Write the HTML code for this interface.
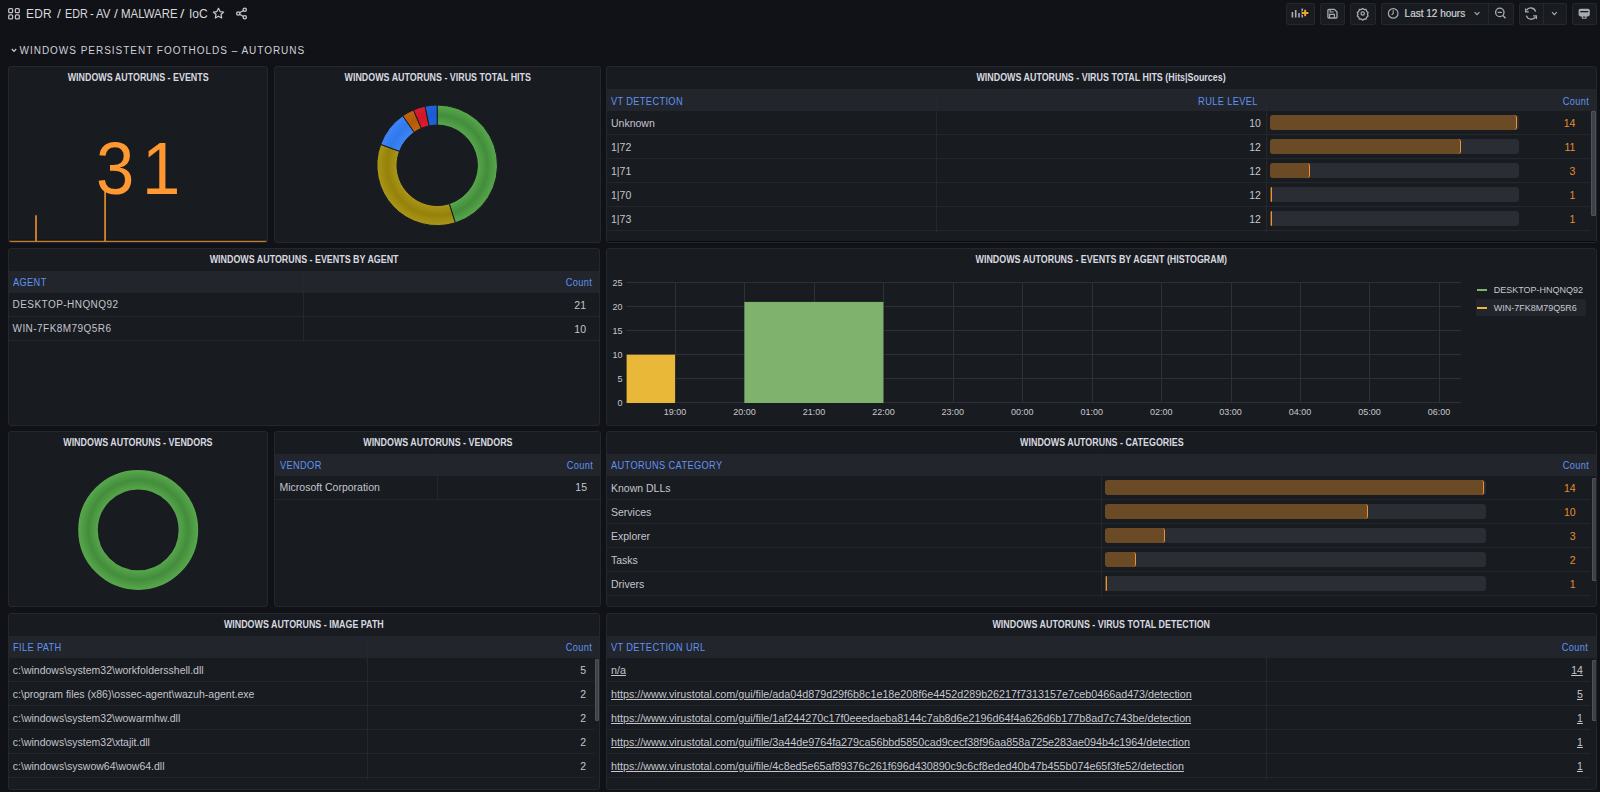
<!DOCTYPE html><html><head><meta charset="utf-8"><style>
*{margin:0;padding:0;box-sizing:border-box}
html,body{width:1600px;height:792px;overflow:hidden;background:#111217;font-family:"Liberation Sans",sans-serif;color:#c4c5ce}
.abs{position:absolute}
.panel{position:absolute;background:#181b1f;border:1px solid #24272c;border-radius:3px;overflow:hidden}
.ttl{position:absolute;left:0;right:0;text-align:center;font-weight:bold;font-size:10px;line-height:12px;white-space:nowrap;color:#d8d9e0}
.ttl span{display:inline-block;transform:scaleX(0.89);transform-origin:center}
.hdr{position:absolute;background:#22252b;}
.th{position:absolute;font-size:10.2px;line-height:12px;color:#5f93f2;white-space:nowrap;letter-spacing:0.4px;transform:scaleX(0.907);transform-origin:0 0}
.th.r{transform-origin:100% 0}
.td{position:absolute;font-size:10.5px;line-height:12px;color:#c4c5ce;white-space:nowrap}
.rl{position:absolute;height:1px;background:#24272c}
.cl{position:absolute;width:1px;background:#24272c}
.btn{position:absolute;top:3px;height:21.5px;border:1px solid #25272c;border-radius:2px;background:#181b1f}
.sb{position:absolute;width:4.5px;background:#3e4148;border:1px solid #50535b;border-radius:1px}
</style></head><body><svg class="abs" style="left:8px;top:8px" width="12" height="12" viewBox="0 0 12 12" fill="none" stroke="#c0c1c8" stroke-width="1.25"><rect x="0.7" y="0.7" width="3.9" height="3.9" rx="0.9"/><rect x="7.4" y="0.7" width="3.9" height="3.9" rx="0.9"/><rect x="0.7" y="6.9" width="3.9" height="3.9" rx="0.9"/><rect x="7.4" y="6.9" width="3.9" height="3.9" rx="0.9"/></svg><div class="abs" style="left:25.98px;top:6px;font-size:13px;line-height:16px;color:#d8d9da;white-space:nowrap;transform-origin:0 0;transform:scaleX(0.915);letter-spacing:0.3px">EDR</div><div class="abs" style="left:57.10px;top:6px;font-size:13px;line-height:16px;color:#d8d9da;white-space:nowrap;transform-origin:0 0;transform:scaleX(1.050);letter-spacing:0px">/</div><div class="abs" style="left:64.57px;top:6px;font-size:13px;line-height:16px;color:#d8d9da;white-space:nowrap;transform-origin:0 0;transform:scaleX(0.829);letter-spacing:0px">EDR</div><div class="abs" style="left:89.80px;top:6px;font-size:13px;line-height:16px;color:#d8d9da;white-space:nowrap;transform-origin:0 0;transform:scaleX(0.850);letter-spacing:0px">-</div><div class="abs" style="left:96.00px;top:6px;font-size:13px;line-height:16px;color:#d8d9da;white-space:nowrap;transform-origin:0 0;transform:scaleX(0.883);letter-spacing:0px">AV</div><div class="abs" style="left:113.80px;top:6px;font-size:13px;line-height:16px;color:#d8d9da;white-space:nowrap;transform-origin:0 0;transform:scaleX(1.050);letter-spacing:0px">/</div><div class="abs" style="left:120.87px;top:6px;font-size:13px;line-height:16px;color:#d8d9da;white-space:nowrap;transform-origin:0 0;transform:scaleX(0.880);letter-spacing:0px">MALWARE</div><div class="abs" style="left:180.40px;top:6px;font-size:13px;line-height:16px;color:#d8d9da;white-space:nowrap;transform-origin:0 0;transform:scaleX(1.200);letter-spacing:0px">/</div><div class="abs" style="left:188.68px;top:6px;font-size:13px;line-height:16px;color:#d8d9da;white-space:nowrap;transform-origin:0 0;transform:scaleX(0.924);letter-spacing:0px">IoC</div><svg class="abs" style="left:212px;top:7px" width="13" height="13" viewBox="0 0 24 24" fill="none" stroke="#c7c8d0" stroke-width="2.2" stroke-linejoin="round"><path d="M12 2.5l2.9 6 6.6.8-4.9 4.5 1.3 6.5L12 17l-5.9 3.3 1.3-6.5L2.5 9.3l6.6-.8z"/></svg><svg class="abs" style="left:235px;top:7px" width="13" height="13" viewBox="0 0 24 24" fill="none" stroke="#c7c8d0" stroke-width="2.4"><circle cx="18" cy="5" r="3"/><circle cx="6" cy="12" r="3"/><circle cx="18" cy="19" r="3"/><path d="M8.6 10.5l6.8-4M8.6 13.5l6.8 4"/></svg><div class="btn" style="left:1286px;width:29px"></div><div class="btn" style="left:1320px;width:25px"></div><div class="btn" style="left:1350px;width:26px"></div><div class="btn" style="left:1381px;width:133px"></div><div class="btn" style="left:1519px;width:48px"></div><div class="btn" style="left:1572px;width:25px"></div><div class="abs" style="left:1488px;top:4px;width:1px;height:20px;background:#25272c"></div><div class="abs" style="left:1543px;top:4px;width:1px;height:20px;background:#25272c"></div><svg class="abs" style="left:0;top:0" width="1600" height="30"><g fill="#a9abb2"><rect x="1291.6" y="12" width="1.6" height="5.5"/><rect x="1294.9" y="10" width="1.6" height="7.5"/><rect x="1298.2" y="13" width="1.6" height="4.5"/><rect x="1301.5" y="8.5" width="1.6" height="9"/></g><path d="M1305.2 9.6v6.8M1301.8 13h6.8" stroke="#0f1116" stroke-width="3.6"/><path d="M1305.2 9.8v6.4M1302 13h6.4" stroke="#f5a52a" stroke-width="2"/><path d="M1328.8 9.4h5.6l2.6 2.6v5.1a0.9 0.9 0 0 1-.9.9h-7.3a0.9 0.9 0 0 1-.9-.9v-6.8a0.9 0.9 0 0 1 .9-.9z" fill="none" stroke="#a9abb2" stroke-width="1.3"/><path d="M1330.2 9.4v2.6h3.6M1329.6 17.8v-3.4h4.8v3.4" fill="none" stroke="#a9abb2" stroke-width="1.2"/><path d="M1362.7 8.4l1.5 1.2 1.9-.1.5 1.8 1.5 1.2-.7 1.8.7 1.8-1.5 1.2-.5 1.8-1.9-.1-1.5 1.2-1.5-1.2-1.9.1-.5-1.8-1.5-1.2.7-1.8-.7-1.8 1.5-1.2.5-1.8 1.9.1z" fill="none" stroke="#a9abb2" stroke-width="1.3" stroke-linejoin="round"/><circle cx="1362.7" cy="13.5" r="1.7" fill="none" stroke="#a9abb2" stroke-width="1.2"/><circle cx="1393.2" cy="13.4" r="4.8" fill="none" stroke="#a9abb2" stroke-width="1.2"/><path d="M1393.2 10.2v3.2l-1.6 1.4" fill="none" stroke="#a9abb2" stroke-width="1.1"/><path d="M1474.6 12.2l2.4 2.4 2.4-2.4" fill="none" stroke="#a9abb2" stroke-width="1.2"/><circle cx="1499.8" cy="12.4" r="4.2" fill="none" stroke="#a9abb2" stroke-width="1.3"/><path d="M1502.9 15.6l2.6 2.7M1497.7 12.4h4.2" stroke="#a9abb2" stroke-width="1.4"/><path d="M1535.6 11.6a5 5 0 0 0-9.1-1.2M1526.4 15.6a5 5 0 0 0 9.1 1.2" fill="none" stroke="#a9abb2" stroke-width="1.3"/><path d="M1525.6 8.6v3.2h3.2M1536.4 19v-3.2h-3.2" fill="none" stroke="#a9abb2" stroke-width="1.3"/><path d="M1552 12.2l2.4 2.4 2.4-2.4" fill="none" stroke="#a9abb2" stroke-width="1.2"/><rect x="1578.6" y="8.8" width="11.2" height="7.6" rx="1.8" fill="#a9abb2"/><rect x="1580.2" y="11" width="8" height="1.3" fill="#181b1f"/><rect x="1581.8" y="16" width="4.8" height="2.8" rx="0.6" fill="#a9abb2"/><rect x="1583" y="16.6" width="2.4" height="1.2" fill="#181b1f"/></svg><div class="abs" style="left:1404.6px;top:7px;font-size:10px;line-height:13px;color:#d0d1d8;-webkit-text-stroke:0.2px #d0d1d8">Last 12 hours</div><svg class="abs" style="left:10.5px;top:48px" width="6" height="5" viewBox="0 0 6 5" fill="none" stroke="#c7c8d0" stroke-width="1.3"><path d="M.8 1l2.2 2.4L5.2 1"/></svg><div class="abs" style="left:19.5px;top:45.3px;font-size:10px;line-height:12px;color:#d0d1d8;letter-spacing:0.98px">WINDOWS PERSISTENT FOOTHOLDS – AUTORUNS</div><div class="panel" style="left:8px;top:66px;width:260px;height:177px"><div class="ttl" style="top:5px"><span>WINDOWS AUTORUNS - EVENTS</span></div><svg class="abs" style="left:0;top:0" width="258" height="175"><path d="M0 174.3H258" stroke="#c27a2c" stroke-width="1.4"/><path d="M0 173H258" stroke="#0f141c" stroke-width="1"/><path d="M27 174V148.3M96.1 174V120.4" stroke="#d9862b" stroke-width="1.8"/></svg><div class="abs" style="left:87.2px;top:63.5px;font-size:74px;line-height:75px;color:#ff9830;transform:scaleX(0.93);transform-origin:0 0">3</div><div class="abs" style="left:133.4px;top:63.5px;font-size:74px;line-height:75px;color:#ff9830;transform:scaleX(0.93);transform-origin:0 0">1</div></div><div class="panel" style="left:274px;top:66px;width:327px;height:177px"><div class="ttl" style="top:5px"><span>WINDOWS AUTORUNS - VIRUS TOTAL HITS</span></div><svg class="abs" style="left:0;top:0" width="327" height="177"><path d="M162.20 38.00A60.3 60.3 0 0 1 180.25 155.83L174.23 136.66A40.2 40.2 0 0 0 162.20 58.10Z" fill="url(#g0)" stroke="#181b1f" stroke-width="1"/><path d="M180.25 155.83A60.3 60.3 0 0 1 105.65 77.36L124.50 84.34A40.2 40.2 0 0 0 174.23 136.66Z" fill="url(#g1)" stroke="#181b1f" stroke-width="1"/><path d="M105.65 77.36A60.3 60.3 0 0 1 127.75 48.81L139.24 65.31A40.2 40.2 0 0 0 124.50 84.34Z" fill="url(#g2)" stroke="#181b1f" stroke-width="1"/><path d="M127.75 48.81A60.3 60.3 0 0 1 138.42 42.89L146.35 61.36A40.2 40.2 0 0 0 139.24 65.31Z" fill="url(#g3)" stroke="#181b1f" stroke-width="1"/><path d="M138.42 42.89A60.3 60.3 0 0 1 150.06 39.23L154.11 58.92A40.2 40.2 0 0 0 146.35 61.36Z" fill="url(#g4)" stroke="#181b1f" stroke-width="1"/><path d="M150.06 39.23A60.3 60.3 0 0 1 162.20 38.00L162.20 58.10A40.2 40.2 0 0 0 154.11 58.92Z" fill="url(#g5)" stroke="#181b1f" stroke-width="1"/><defs><radialGradient id="g0" gradientUnits="userSpaceOnUse" cx="162.2" cy="98.3" r="60.3"><stop offset="0.66" stop-color="#58a84d"/><stop offset="0.83" stop-color="#438d3b"/><stop offset="1" stop-color="#58a84d"/></radialGradient><radialGradient id="g1" gradientUnits="userSpaceOnUse" cx="162.2" cy="98.3" r="60.3"><stop offset="0.66" stop-color="#aa9618"/><stop offset="0.83" stop-color="#96820a"/><stop offset="1" stop-color="#aa9618"/></radialGradient><radialGradient id="g2" gradientUnits="userSpaceOnUse" cx="162.2" cy="98.3" r="60.3"><stop offset="0.66" stop-color="#3f86f6"/><stop offset="0.83" stop-color="#3079ec"/><stop offset="1" stop-color="#3f86f6"/></radialGradient><radialGradient id="g3" gradientUnits="userSpaceOnUse" cx="162.2" cy="98.3" r="60.3"><stop offset="0.66" stop-color="#c06410"/><stop offset="0.83" stop-color="#b35a0a"/><stop offset="1" stop-color="#c06410"/></radialGradient><radialGradient id="g4" gradientUnits="userSpaceOnUse" cx="162.2" cy="98.3" r="60.3"><stop offset="0.66" stop-color="#dc1d31"/><stop offset="0.83" stop-color="#cf1529"/><stop offset="1" stop-color="#dc1d31"/></radialGradient><radialGradient id="g5" gradientUnits="userSpaceOnUse" cx="162.2" cy="98.3" r="60.3"><stop offset="0.66" stop-color="#2064da"/><stop offset="0.83" stop-color="#1a5bd0"/><stop offset="1" stop-color="#2064da"/></radialGradient></defs></svg></div><div class="panel" style="left:606px;top:66px;width:991px;height:177px"><div class="ttl" style="top:5px"><span>WINDOWS AUTORUNS - VIRUS TOTAL HITS (Hits|Sources)</span></div><div class="hdr" style="left:0;top:22px;width:989px;height:22px"></div><div class="cl" style="left:328.6px;top:22px;height:144px"></div><div class="cl" style="left:658.5px;top:22px;height:144px"></div><div class="rl" style="left:0;top:67px;width:983px"></div><div class="rl" style="left:0;top:91px;width:983px"></div><div class="rl" style="left:0;top:115px;width:983px"></div><div class="rl" style="left:0;top:139px;width:983px"></div><div class="rl" style="left:0;top:163px;width:983px"></div><div class="th" style="left:3.6px;top:28.6px">VT DETECTION</div><div class="th r" style="right:338.0px;top:28.6px">RULE LEVEL</div><div class="th r" style="right:7.3px;top:28.6px">Count</div><div class="td" style="left:4px;top:49.5px;">Unknown</div><div class="td" style="right:335.1px;top:49.5px;">10</div><div class="abs" style="left:663px;top:48px;width:249px;height:15px;border-radius:3px;background:#2a2d33"></div><div class="abs" style="left:663px;top:48px;width:247.0px;height:15px;border-radius:3px;background:#6b4a26;border-right:1.5px solid #f0912e"></div><div class="td" style="right:20.6px;top:49.5px;color:#e98c2c;">14</div><div class="td" style="left:4px;top:73.5px;">1|72</div><div class="td" style="right:335.1px;top:73.5px;">12</div><div class="abs" style="left:663px;top:72px;width:249px;height:15px;border-radius:3px;background:#2a2d33"></div><div class="abs" style="left:663px;top:72px;width:190.5px;height:15px;border-radius:3px;background:#6b4a26;border-right:1.5px solid #f0912e"></div><div class="td" style="right:20.6px;top:73.5px;color:#e98c2c;">11</div><div class="td" style="left:4px;top:97.5px;">1|71</div><div class="td" style="right:335.1px;top:97.5px;">12</div><div class="abs" style="left:663px;top:96px;width:249px;height:15px;border-radius:3px;background:#2a2d33"></div><div class="abs" style="left:663px;top:96px;width:39.7px;height:15px;border-radius:3px;background:#6b4a26;border-right:1.5px solid #f0912e"></div><div class="td" style="right:20.6px;top:97.5px;color:#e98c2c;">3</div><div class="td" style="left:4px;top:121.5px;">1|70</div><div class="td" style="right:335.1px;top:121.5px;">12</div><div class="abs" style="left:663px;top:120px;width:249px;height:15px;border-radius:3px;background:#2a2d33"></div><div class="abs" style="left:663px;top:120px;width:2.0px;height:15px;border-radius:3px;background:#6b4a26;border-right:1.5px solid #f0912e"></div><div class="td" style="right:20.6px;top:121.5px;color:#e98c2c;">1</div><div class="td" style="left:4px;top:145.5px;">1|73</div><div class="td" style="right:335.1px;top:145.5px;">12</div><div class="abs" style="left:663px;top:144px;width:249px;height:15px;border-radius:3px;background:#2a2d33"></div><div class="abs" style="left:663px;top:144px;width:2.0px;height:15px;border-radius:3px;background:#6b4a26;border-right:1.5px solid #f0912e"></div><div class="td" style="right:20.6px;top:145.5px;color:#e98c2c;">1</div><div class="sb" style="left:984px;top:44px;height:105px"></div><div class="abs" style="left:0;top:174px;width:989px;height:1px;background:#0a0b0d"></div></div><div class="panel" style="left:8px;top:248px;width:592px;height:178px"><div class="ttl" style="top:5px"><span>WINDOWS AUTORUNS - EVENTS BY AGENT</span></div><div class="hdr" style="left:0;top:22px;width:590px;height:22px"></div><div class="cl" style="left:294px;top:22px;height:70px"></div><div class="rl" style="left:0;top:67px;width:590px"></div><div class="rl" style="left:0;top:91px;width:590px"></div><div class="th" style="left:4px;top:28.3px">AGENT</div><div class="th r" style="right:6.6px;top:28.3px">Count</div><div class="td" style="left:3.5px;top:49.8px;font-size:10px;letter-spacing:0.45px">DESKTOP-HNQNQ92</div><div class="td" style="right:13.0px;top:49.5px;">21</div><div class="td" style="left:3.5px;top:73.8px;font-size:10px;letter-spacing:0.45px">WIN-7FK8M79Q5R6</div><div class="td" style="right:13.0px;top:73.5px;">10</div></div><div class="panel" style="left:606px;top:248px;width:991px;height:178px"><div class="ttl" style="top:5px"><span>WINDOWS AUTORUNS - EVENTS BY AGENT (HISTOGRAM)</span></div><svg class="abs" style="left:0;top:0" width="989" height="176"><path d="M19.6 153.5H854" stroke="#2d3036" stroke-width="1"/><path d="M19.6 129.5H854" stroke="#2d3036" stroke-width="1"/><path d="M19.6 105.5H854" stroke="#2d3036" stroke-width="1"/><path d="M19.6 81.5H854" stroke="#2d3036" stroke-width="1"/><path d="M19.6 57.5H854" stroke="#2d3036" stroke-width="1"/><path d="M19.6 33.5H854" stroke="#2d3036" stroke-width="1"/><path d="M68.5 33V154" stroke="#2d3036" stroke-width="1"/><path d="M137.5 33V154" stroke="#2d3036" stroke-width="1"/><path d="M207.5 33V154" stroke="#2d3036" stroke-width="1"/><path d="M276.5 33V154" stroke="#2d3036" stroke-width="1"/><path d="M346.5 33V154" stroke="#2d3036" stroke-width="1"/><path d="M415.5 33V154" stroke="#2d3036" stroke-width="1"/><path d="M485.5 33V154" stroke="#2d3036" stroke-width="1"/><path d="M554.5 33V154" stroke="#2d3036" stroke-width="1"/><path d="M624.5 33V154" stroke="#2d3036" stroke-width="1"/><path d="M693.5 33V154" stroke="#2d3036" stroke-width="1"/><path d="M762.5 33V154" stroke="#2d3036" stroke-width="1"/><path d="M832.5 33V154" stroke="#2d3036" stroke-width="1"/><rect x="19.6" y="105.7" width="48.4" height="48.3" fill="#eab839"/><rect x="137.4" y="52.9" width="139" height="101.1" fill="#7eb26d"/></svg><div class="abs" style="right:973.5px;top:148.7px;font-size:9px;line-height:11px;color:#c7c8d0;text-align:right">0</div><div class="abs" style="right:973.5px;top:124.7px;font-size:9px;line-height:11px;color:#c7c8d0;text-align:right">5</div><div class="abs" style="right:973.5px;top:100.7px;font-size:9px;line-height:11px;color:#c7c8d0;text-align:right">10</div><div class="abs" style="right:973.5px;top:76.7px;font-size:9px;line-height:11px;color:#c7c8d0;text-align:right">15</div><div class="abs" style="right:973.5px;top:52.7px;font-size:9px;line-height:11px;color:#c7c8d0;text-align:right">20</div><div class="abs" style="right:973.5px;top:28.7px;font-size:9px;line-height:11px;color:#c7c8d0;text-align:right">25</div><div class="abs" style="left:48.0px;width:40px;top:157.5px;font-size:9px;line-height:11px;color:#c7c8d0;text-align:center">19:00</div><div class="abs" style="left:117.4px;width:40px;top:157.5px;font-size:9px;line-height:11px;color:#c7c8d0;text-align:center">20:00</div><div class="abs" style="left:186.9px;width:40px;top:157.5px;font-size:9px;line-height:11px;color:#c7c8d0;text-align:center">21:00</div><div class="abs" style="left:256.4px;width:40px;top:157.5px;font-size:9px;line-height:11px;color:#c7c8d0;text-align:center">22:00</div><div class="abs" style="left:325.8px;width:40px;top:157.5px;font-size:9px;line-height:11px;color:#c7c8d0;text-align:center">23:00</div><div class="abs" style="left:395.2px;width:40px;top:157.5px;font-size:9px;line-height:11px;color:#c7c8d0;text-align:center">00:00</div><div class="abs" style="left:464.7px;width:40px;top:157.5px;font-size:9px;line-height:11px;color:#c7c8d0;text-align:center">01:00</div><div class="abs" style="left:534.2px;width:40px;top:157.5px;font-size:9px;line-height:11px;color:#c7c8d0;text-align:center">02:00</div><div class="abs" style="left:603.6px;width:40px;top:157.5px;font-size:9px;line-height:11px;color:#c7c8d0;text-align:center">03:00</div><div class="abs" style="left:673.1px;width:40px;top:157.5px;font-size:9px;line-height:11px;color:#c7c8d0;text-align:center">04:00</div><div class="abs" style="left:742.5px;width:40px;top:157.5px;font-size:9px;line-height:11px;color:#c7c8d0;text-align:center">05:00</div><div class="abs" style="left:812.0px;width:40px;top:157.5px;font-size:9px;line-height:11px;color:#c7c8d0;text-align:center">06:00</div><div class="abs" style="left:868.6px;top:49.75px;width:110.4px;height:17.5px;background:#22252b;border-radius:2px"></div><div class="abs" style="left:869.6px;top:40px;width:10.3px;height:2px;background:#7eb26d"></div><div class="abs" style="left:869.6px;top:58px;width:10.3px;height:2px;background:#eab839"></div><div class="abs" style="left:886.75px;top:35.5px;font-size:9px;line-height:11px;color:#c7c8d0;letter-spacing:0px">DESKTOP-HNQNQ92</div><div class="abs" style="left:886.75px;top:53.5px;font-size:9px;line-height:11px;color:#c7c8d0;letter-spacing:0px">WIN-7FK8M79Q5R6</div></div><div class="panel" style="left:8px;top:431px;width:260px;height:176px"><div class="ttl" style="top:5px"><span>WINDOWS AUTORUNS - VENDORS</span></div><svg class="abs" style="left:0;top:0" width="258" height="174"><circle cx="129.2" cy="97.9" r="50.2" fill="none" stroke="url(#g6)" stroke-width="19.6"/><defs><radialGradient id="g6" gradientUnits="userSpaceOnUse" cx="129.2" cy="97.9" r="60"><stop offset="0.66" stop-color="#58a84d"/><stop offset="0.83" stop-color="#438d3b"/><stop offset="1" stop-color="#58a84d"/></radialGradient></defs></svg></div><div class="panel" style="left:274px;top:431px;width:327px;height:176px"><div class="ttl" style="top:5px"><span>WINDOWS AUTORUNS - VENDORS</span></div><div class="hdr" style="left:0;top:21.6px;width:325px;height:22px"></div><div class="cl" style="left:162.3px;top:21.6px;height:46.4px"></div><div class="rl" style="left:0;top:66.6px;width:325px"></div><div class="th" style="left:4.5px;top:27.5px">VENDOR</div><div class="th r" style="right:6.8px;top:27.5px">Count</div><div class="td" style="left:4.5px;top:49.1px;">Microsoft Corporation</div><div class="td" style="right:13.0px;top:49.1px;">15</div></div><div class="panel" style="left:606px;top:431px;width:991px;height:176px"><div class="ttl" style="top:5px"><span>WINDOWS AUTORUNS - CATEGORIES</span></div><div class="hdr" style="left:0;top:22px;width:989px;height:22px"></div><div class="cl" style="left:494px;top:22px;height:144px"></div><div class="rl" style="left:0;top:67px;width:983px"></div><div class="rl" style="left:0;top:91px;width:983px"></div><div class="rl" style="left:0;top:115px;width:983px"></div><div class="rl" style="left:0;top:139px;width:983px"></div><div class="rl" style="left:0;top:163px;width:983px"></div><div class="th" style="left:4px;top:27.9px">AUTORUNS CATEGORY</div><div class="th r" style="right:7.3px;top:27.9px">Count</div><div class="td" style="left:4px;top:49.5px;">Known DLLs</div><div class="abs" style="left:497.8px;top:48px;width:381px;height:15px;border-radius:3px;background:#2a2d33"></div><div class="abs" style="left:497.8px;top:48px;width:379.0px;height:15px;border-radius:3px;background:#6b4a26;border-right:1.5px solid #f0912e"></div><div class="td" style="right:20.4px;top:49.5px;color:#e98c2c;">14</div><div class="td" style="left:4px;top:73.5px;">Services</div><div class="abs" style="left:497.8px;top:72px;width:381px;height:15px;border-radius:3px;background:#2a2d33"></div><div class="abs" style="left:497.8px;top:72px;width:263.0px;height:15px;border-radius:3px;background:#6b4a26;border-right:1.5px solid #f0912e"></div><div class="td" style="right:20.4px;top:73.5px;color:#e98c2c;">10</div><div class="td" style="left:4px;top:97.5px;">Explorer</div><div class="abs" style="left:497.8px;top:96px;width:381px;height:15px;border-radius:3px;background:#2a2d33"></div><div class="abs" style="left:497.8px;top:96px;width:60.0px;height:15px;border-radius:3px;background:#6b4a26;border-right:1.5px solid #f0912e"></div><div class="td" style="right:20.4px;top:97.5px;color:#e98c2c;">3</div><div class="td" style="left:4px;top:121.5px;">Tasks</div><div class="abs" style="left:497.8px;top:120px;width:381px;height:15px;border-radius:3px;background:#2a2d33"></div><div class="abs" style="left:497.8px;top:120px;width:31.0px;height:15px;border-radius:3px;background:#6b4a26;border-right:1.5px solid #f0912e"></div><div class="td" style="right:20.4px;top:121.5px;color:#e98c2c;">2</div><div class="td" style="left:4px;top:145.5px;">Drivers</div><div class="abs" style="left:497.8px;top:144px;width:381px;height:15px;border-radius:3px;background:#2a2d33"></div><div class="abs" style="left:497.8px;top:144px;width:2.0px;height:15px;border-radius:3px;background:#6b4a26;border-right:1.5px solid #f0912e"></div><div class="td" style="right:20.4px;top:145.5px;color:#e98c2c;">1</div><div class="sb" style="left:985px;top:45.6px;height:103.4px"></div></div><div class="panel" style="left:8px;top:613px;width:592px;height:177px"><div class="ttl" style="top:5px"><span>WINDOWS AUTORUNS - IMAGE PATH</span></div><div class="hdr" style="left:0;top:22px;width:590px;height:22px"></div><div class="cl" style="left:357.8px;top:22px;height:144px"></div><div class="rl" style="left:0;top:67px;width:585px"></div><div class="rl" style="left:0;top:91px;width:585px"></div><div class="rl" style="left:0;top:115px;width:585px"></div><div class="rl" style="left:0;top:139px;width:585px"></div><div class="rl" style="left:0;top:163px;width:585px"></div><div class="th" style="left:4px;top:27.9px">FILE PATH</div><div class="th r" style="right:6.6px;top:27.9px">Count</div><div class="td" style="left:3.8px;top:49.5px;">c:\windows\system32\workfoldersshell.dll</div><div class="td" style="right:13.0px;top:49.5px;">5</div><div class="td" style="left:3.8px;top:73.5px;">c:\program files (x86)\ossec-agent\wazuh-agent.exe</div><div class="td" style="right:13.0px;top:73.5px;">2</div><div class="td" style="left:3.8px;top:97.5px;">c:\windows\system32\wowarmhw.dll</div><div class="td" style="right:13.0px;top:97.5px;">2</div><div class="td" style="left:3.8px;top:121.5px;">c:\windows\system32\xtajit.dll</div><div class="td" style="right:13.0px;top:121.5px;">2</div><div class="td" style="left:3.8px;top:145.5px;">c:\windows\syswow64\wow64.dll</div><div class="td" style="right:13.0px;top:145.5px;">2</div><div class="sb" style="left:585.7px;top:45px;height:62.3px"></div></div><div class="panel" style="left:606px;top:613px;width:991px;height:177px"><div class="ttl" style="top:5px"><span>WINDOWS AUTORUNS - VIRUS TOTAL DETECTION</span></div><div class="hdr" style="left:0;top:22px;width:989px;height:22px"></div><div class="cl" style="left:658.6px;top:22px;height:144px"></div><div class="rl" style="left:0;top:67px;width:983px"></div><div class="rl" style="left:0;top:91px;width:983px"></div><div class="rl" style="left:0;top:115px;width:983px"></div><div class="rl" style="left:0;top:139px;width:983px"></div><div class="rl" style="left:0;top:163px;width:983px"></div><div class="th" style="left:4px;top:27.9px">VT DETECTION URL</div><div class="th r" style="right:7.6px;top:27.9px">Count</div><div class="td" style="left:4px;top:49.5px;text-decoration:underline;font-size:10.8px;letter-spacing:-0.02px">n/a</div><div class="td" style="right:13.2px;top:49.5px;text-decoration:underline">14</div><div class="td" style="left:4px;top:73.5px;text-decoration:underline;font-size:10.8px;letter-spacing:-0.02px">https://www.virustotal.com/gui/file/ada04d879d29f6b8c1e18e208f6e4452d289b26217f7313157e7ceb0466ad473/detection</div><div class="td" style="right:13.2px;top:73.5px;text-decoration:underline">5</div><div class="td" style="left:4px;top:97.5px;text-decoration:underline;font-size:10.8px;letter-spacing:-0.02px">https://www.virustotal.com/gui/file/1af244270c17f0eeedaeba8144c7ab8d6e2196d64f4a626d6b177b8ad7c743be/detection</div><div class="td" style="right:13.2px;top:97.5px;text-decoration:underline">1</div><div class="td" style="left:4px;top:121.5px;text-decoration:underline;font-size:10.8px;letter-spacing:-0.02px">https://www.virustotal.com/gui/file/3a44de9764fa279ca56bbd5850cad9cecf38f96aa858a725e283ae094b4c1964/detection</div><div class="td" style="right:13.2px;top:121.5px;text-decoration:underline">1</div><div class="td" style="left:4px;top:145.5px;text-decoration:underline;font-size:10.8px;letter-spacing:-0.02px">https://www.virustotal.com/gui/file/4c8ed5e65af89376c261f696d430890c9c6cf8eded40b47b455b074e65f3fe52/detection</div><div class="td" style="right:13.2px;top:145.5px;text-decoration:underline">1</div><div class="sb" style="left:985px;top:45.7px;height:60.89999999999999px"></div></div></body></html>
